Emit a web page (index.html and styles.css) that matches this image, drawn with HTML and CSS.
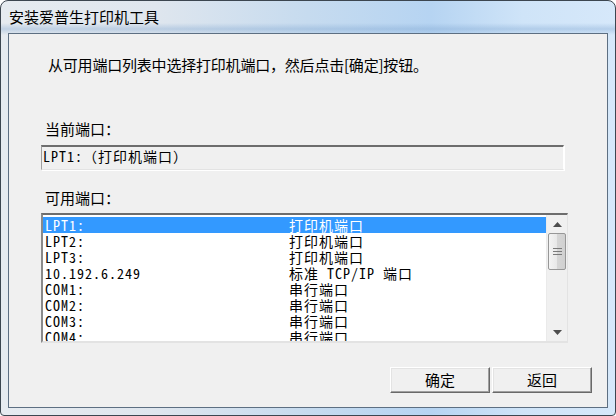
FILE: index.html
```html
<!DOCTYPE html>
<html lang="zh-CN">
<head>
<meta charset="utf-8">
<title>安装爱普生打印机工具</title>
<link rel="stylesheet" href="styles.css">
</head>
<body>
<div class="window">
  <div class="titlebar">
    <span class="title">安装爱普生打印机工具</span>
  </div>
  <div class="client">
    <p class="intro">从可用端口列表中选择打印机端口，然后点击[确定]按钮。</p>
    <div class="label label-current">当前端口：</div>
    <div class="textbox"><span class="mono">LPT1:（打印机端口）</span></div>
    <div class="label label-avail">可用端口：</div>
    <div class="listbox">
      <div class="rows mono">
        <div class="row selected"><span class="c1">LPT1:</span><span class="c2">打印机端口</span></div>
        <div class="row"><span class="c1">LPT2:</span><span class="c2">打印机端口</span></div>
        <div class="row"><span class="c1">LPT3:</span><span class="c2">打印机端口</span></div>
        <div class="row"><span class="c1">10.192.6.249</span><span class="c2">标准 TCP/IP 端口</span></div>
        <div class="row"><span class="c1">COM1:</span><span class="c2">串行端口</span></div>
        <div class="row"><span class="c1">COM2:</span><span class="c2">串行端口</span></div>
        <div class="row"><span class="c1">COM3:</span><span class="c2">串行端口</span></div>
        <div class="row"><span class="c1">COM4:</span><span class="c2">串行端口</span></div>
      </div>
      <div class="scrollbar">
        <div class="arrow">
          <svg width="9" height="5" viewBox="0 0 9 5"><path d="M0 5 L4.5 0 L9 5 Z" fill="#4d4d4d"/></svg>
        </div>
        <div class="track">
          <div class="thumb">
            <svg width="9" height="8" viewBox="0 0 9 8"><path d="M0 0.5H9M0 3.5H9M0 6.5H9" stroke="#7a7a7a" stroke-width="1"/></svg>
          </div>
        </div>
        <div class="arrow">
          <svg width="9" height="5" viewBox="0 0 9 5"><path d="M0 0 L9 0 L4.5 5 Z" fill="#4d4d4d"/></svg>
        </div>
      </div>
    </div>
    <div class="buttons">
      <button class="btn">确定</button>
      <button class="btn">返回</button>
    </div>
  </div>
</div>
</body>
</html>
```

FILE: styles.css
```css
html, body {
  margin: 0;
  padding: 0;
  background: #ffffff;
}

body {
  font-family: "Noto Sans CJK SC", "Liberation Sans", sans-serif;
  width: 616px;
  height: 416px;
  overflow: hidden;
}

.window {
  box-sizing: border-box;
  width: 616px;
  height: 416px;
  border: 1px solid #3c4650;
  border-radius: 8px 8px 4px 4px;
  background:
    linear-gradient(to bottom, rgba(255,255,255,0) 0px, rgba(255,255,255,0) 22px, rgba(120,160,205,0.35) 28px, rgba(255,255,255,0) 34px),
    linear-gradient(to right, #e6ebf0 0%, #dfe6ee 25%, #c6dbef 50%, #b6d4f2 70%, #cfe4f8 85%, #d6e8fa 100%);
  display: flex;
  flex-direction: column;
  padding: 0 7px 7px 7px;
}

.titlebar {
  height: 32px;
  display: flex;
  align-items: center;
  padding-left: 1px;
}

.title {
  font-size: 15px;
  line-height: 16px;
  color: #000;
}

.client {
  flex: 1;
  background: #f0f0f0;
  border: 1px solid #5d6f82;
  display: flex;
  flex-direction: column;
  padding-left: 32px;
  font-size: 15px;
  line-height: 16px;
  color: #000;
}

.intro {
  margin: 23px 0 0 7px;
  line-height: 16px;
  font-size: 15px;
  letter-spacing: -0.2px;
}

.label {
  line-height: 16px;
  margin-left: 4px;
}

.label-current {
  margin-top: 48px;
}

.label-avail {
  margin-top: 20px;
}

.mono {
  font-family: "Noto Sans Mono CJK SC", "Liberation Mono", monospace;
  font-size: 14px;
  letter-spacing: 1px;
}

.textbox {
  box-sizing: border-box;
  width: 523px;
  height: 25px;
  margin-top: 8px;
  border-top: 2px solid #6d6d6d;
  border-left: 1px solid #a0a0a0;
  border-right: 1px solid #ffffff;
  border-bottom: 1px solid #e3e3e3;
  box-shadow: 1px 1px 0 #ffffff;
  background: #f0f0f0;
  line-height: 18px;
  padding-left: 1px;
  white-space: nowrap;
}

.listbox {
  box-sizing: border-box;
  width: 527px;
  height: 130px;
  margin-top: 7px;
  border-top: 2px solid #6d6d6d;
  border-left: 2px solid #8a8a8a;
  border-right: 1px solid #e3e3e3;
  border-bottom: 2px solid #e3e3e3;
  background: #ffffff;
  display: flex;
  overflow: hidden;
}

.rows {
  flex: 1;
  overflow: hidden;
  padding-top: 2px;
  line-height: 16px;
}

.row {
  height: 16px;
  line-height: 16px;
  display: flex;
  white-space: nowrap;
  padding-left: 2px;
  color: #000;
}

.row.selected {
  background: #3399ff;
  color: #ffffff;
}

.c1 {
  width: 244px;
  flex: none;
}

.scrollbar {
  width: 20px;
  flex: none;
  background: #f0f0f0;
  border-left: 1px solid #eaeaea;
  display: flex;
  flex-direction: column;
}

.arrow {
  height: 18px;
  display: flex;
  align-items: center;
  justify-content: center;
}

.track {
  flex: 1;
  display: flex;
  flex-direction: column;
}

.thumb {
  box-sizing: border-box;
  height: 37px;
  margin: 0 1px;
  border: 1px solid #979797;
  border-radius: 2px;
  background: linear-gradient(to right, #f4f4f4 0%, #e8e8e8 50%, #d6d6d6 51%, #d0d0d0 100%);
  display: flex;
  align-items: center;
  justify-content: center;
}

.buttons {
  display: flex;
  justify-content: flex-end;
  gap: 2px;
  margin-top: 24px;
  margin-right: 15px;
}

.btn {
  box-sizing: border-box;
  width: 100px;
  height: 26px;
  font-family: "Noto Sans CJK SC", sans-serif;
  font-size: 15px;
  line-height: 18px;
  color: #000;
  background: #f0f0f0;
  border: 1px solid;
  border-color: #ffffff #696969 #696969 #ffffff;
  box-shadow: inset -1px -1px 0 #a0a0a0, inset 1px 1px 0 #e3e3e3;
  padding: 0;
  border-radius: 0;
}
```
